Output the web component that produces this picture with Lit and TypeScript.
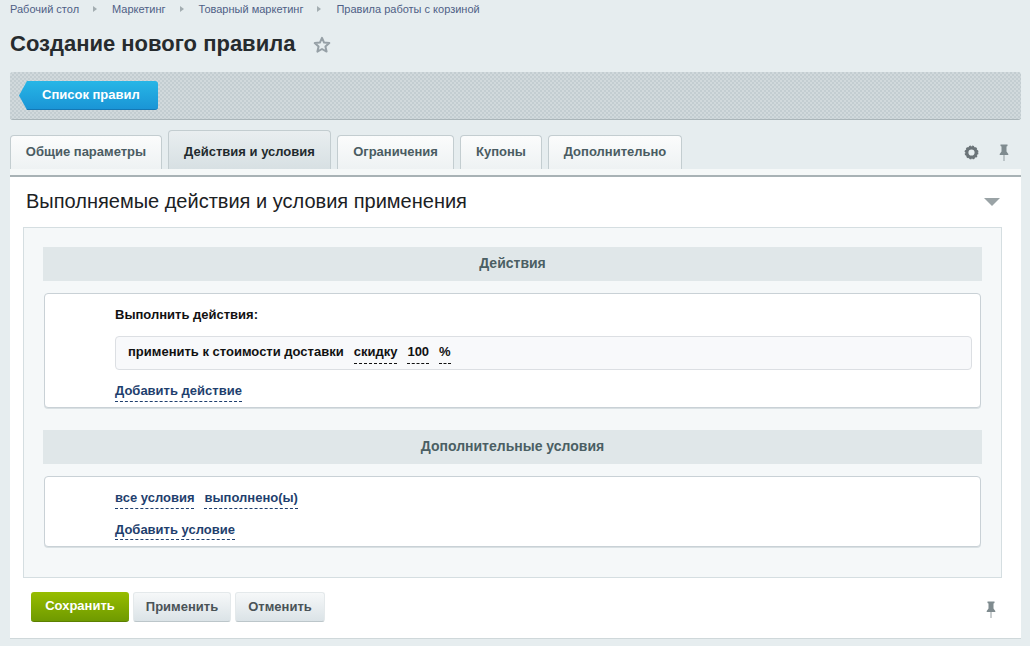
import { LitElement, html, css, svg } from "lit";
import { customElement } from "lit/decorators.js";

const pin = (cls: string) => html`<svg class=${cls} width="10" height="17" viewBox="0 0 10 17">
  <path d="M1.5 0.5h7v1.4l-1 .7v5l1.8 2.4v.9H.7v-.9l1.8-2.4v-5l-1-.7z" fill="#7f8b8f"/>
  <path d="M5 11v6" stroke="#939da1" stroke-width="1" fill="none"/>
</svg>`;

@customElement("app-root")
export class AppRoot extends LitElement {
  static styles = css`
    :host {
      display: block;
      width: 1030px;
      height: 646px;
      overflow: hidden;
      box-sizing: border-box;
      padding: 0 9px 0 10px;
      background: #e6edef;
      font-family: "Liberation Sans", Arial, sans-serif;
      color: #1f2a2e;
    }
    .crumbs {
      display: flex;
      align-items: center;
      height: 18px;
      font-size: 11px;
      color: #4f5f86;
    }
    .crumbs .sep {
      width: 0;
      height: 0;
      border-left: 4px solid #a3adb1;
      border-top: 3.5px solid transparent;
      border-bottom: 3.5px solid transparent;
      margin: 0 15px 0 14px;
    }
    .title-row {
      display: flex;
      align-items: center;
      height: 34px;
      margin-top: 9px;
    }
    h1 {
      margin: 0;
      font-size: 22px;
      line-height: 34px;
      font-weight: bold;
      color: #262b2e;
    }
    .star {
      margin-left: 18px;
      margin-top: 2px;
    }
    .toolbar {
      box-sizing: border-box;
      height: 48px;
      margin-top: 11px;
      padding: 9px 0 0 9px;
      border-radius: 3px;
      border-bottom: 1px solid #a9b4b8;
      background-color: #d1d9dc;
      background-image:
        radial-gradient(circle at 1px 1px, #bec9cd 0.6px, transparent 1px),
        radial-gradient(circle at 3px 3px, #bec9cd 0.6px, transparent 1px);
      background-size: 4px 4px;
    }
    .back {
      position: relative;
      box-sizing: border-box;
      width: 139px;
      height: 29px;
      border-radius: 0 3px 3px 0;
      background: linear-gradient(#27b6e6, #1a95d6);
      border-bottom: 1px solid #1578b4;
      color: #fff;
      font-size: 13px;
      font-weight: bold;
      line-height: 27px;
      padding-left: 23px;
      clip-path: polygon(8px 0, 100% 0, 100% 100%, 8px 100%, 0 50%);
    }
    .tabs {
      display: flex;
      align-items: flex-end;
      height: 39px;
      margin-top: 10px;
      gap: 6px;
    }
    .tab {
      box-sizing: border-box;
      height: 34px;
      border: 1px solid #c3cdd0;
      border-bottom: none;
      border-radius: 4px 4px 0 0;
      background: linear-gradient(#fbfcfc, #eef2f3);
      font-size: 13px;
      font-weight: bold;
      line-height: 32px;
      color: #4a5c62;
      text-align: center;
    }
    .tab.active {
      height: 39px;
      line-height: 41px;
      background: linear-gradient(#e9eef0, #d7e0e3);
      color: #1f2a2e;
    }
    .tab-tools {
      margin-left: auto;
      display: flex;
      align-items: center;
      gap: 20px;
      height: 34px;
      padding-right: 12px;
    }
    .panel {
      box-sizing: border-box;
      height: 464px;
      margin-top: 6px;
      background: #fff;
      border-top: 2px solid #a8b2b5;
      border-bottom: 1px solid #cfd8da;
      box-shadow: 0 -6px 0 0 #f5f8f8;
    }
    .panel-head {
      display: flex;
      align-items: center;
      justify-content: space-between;
      height: 48px;
      padding: 0 21px 0 16px;
      font-size: 20px;
      color: #1b2124;
    }
    .arrow {
      width: 0;
      height: 0;
      border-top: 8px solid #9aa3a6;
      border-left: 8.5px solid transparent;
      border-right: 8.5px solid transparent;
      margin-top: 2px;
    }
    .inner {
      box-sizing: border-box;
      height: 351px;
      margin: 2px 19px 0 13px;
      padding: 19px 19px 0 19px;
      background: #f5f8f9;
      border: 1px solid #d5dee1;
    }
    .sec {
      height: 34px;
      background: #e0e7e9;
      font-size: 14px;
      font-weight: bold;
      line-height: 32px;
      text-align: center;
      color: #4b5f64;
    }
    .card {
      box-sizing: border-box;
      margin: 12px 1px 22px 1px;
      padding: 0 8px 0 70px;
      background: #fff;
      border: 1px solid #c9d1d6;
      border-radius: 4px;
      box-shadow: 0 1px 0 #d9e0e3;
    }
    .card.a {
      height: 115px;
      padding-top: 13px;
    }
    .card.b {
      height: 71px;
      padding-top: 13px;
    }
    .label {
      font-size: 13px;
      font-weight: bold;
      line-height: 16px;
      color: #111;
    }
    .row {
      box-sizing: border-box;
      display: flex;
      gap: 10px;
      align-items: flex-start;
      height: 34px;
      margin-top: 13px;
      padding: 7px 0 0 12px;
      background: #f8f9fb;
      border: 1px solid #dcdfe3;
      border-radius: 4px;
      font-size: 13px;
      font-weight: bold;
      line-height: 15px;
      color: #111;
    }
    .d {
      display: inline-block;
      height: 20px;
      border-bottom: 1px dashed #111;
      box-sizing: border-box;
    }
    .link {
      display: inline-block;
      box-sizing: border-box;
      font-size: 13px;
      font-weight: bold;
      line-height: 15px;
      height: 19px;
      color: #1f3f6e;
      border-bottom: 1px dashed #1f3f6e;
    }
    .add {
      margin-top: 13px;
      display: block;
      width: fit-content;
    }
    .b .add {
      height: 18px;
    }
    .links {
      display: flex;
      gap: 10px;
    }
    .footer {
      display: flex;
      align-items: flex-start;
      gap: 4px;
      height: 60px;
      padding: 14px 0 0 21px;
    }
    .btn {
      box-sizing: border-box;
      height: 30px;
      border-radius: 3px;
      font-size: 13px;
      font-weight: bold;
      line-height: 28px;
      text-align: center;
    }
    .btn.g {
      width: 98px;
      background: linear-gradient(#97bd00, #6f9a00);
      border-bottom: 1px solid #5c8000;
      color: #fff;
    }
    .btn.n {
      background: linear-gradient(#f6f8f9, #dbe3e7);
      border: 1px solid #e4e9eb;
      border-bottom: 1px solid #bcc6ca;
      color: #4a5357;
    }
    .foot-pin {
      margin-left: auto;
      margin-top: 9px;
      margin-right: 25px;
    }
  `;

  render() {
    const tabs: [string, number, boolean][] = [
      ["Общие параметры", 152, false],
      ["Действия и условия", 163, true],
      ["Ограничения", 117, false],
      ["Купоны", 82, false],
      ["Дополнительно", 134, false],
    ];
    return html`
      <div class="crumbs">
        <span>Рабочий стол</span><i class="sep"></i>
        <span>Маркетинг</span><i class="sep"></i>
        <span>Товарный маркетинг</span><i class="sep"></i>
        <span>Правила работы с корзиной</span>
      </div>
      <div class="title-row">
        <h1>Создание нового правила</h1>
        <svg class="star" width="18" height="18" viewBox="0 0 18 18">
          ${svg`<path d="M9 1.8l2.1 4.8 5.2.5-3.9 3.4 1.2 5.1L9 13l-4.6 2.6 1.2-5.1-3.9-3.4 5.2-.5z" fill="none" stroke="#96a0a6" stroke-width="2" stroke-linejoin="round"/>`}
        </svg>
      </div>
      <div class="toolbar"><div class="back">Список правил</div></div>
      <div class="tabs">
        ${tabs.map(
          ([t, w, a]) =>
            html`<div class="tab ${a ? "active" : ""}" style="width:${w}px">${t}</div>`
        )}
        <div class="tab-tools">
          <svg width="15" height="15" viewBox="0 0 16 16">
            <circle cx="8" cy="8" r="5" fill="none" stroke="#6b7478" stroke-width="3.4"/>
            <circle cx="8" cy="8" r="6.6" fill="none" stroke="#6b7478" stroke-width="1.6" stroke-dasharray="2 1.45"/>
          </svg>
          ${pin("")}
        </div>
      </div>
      <div class="panel">
        <div class="panel-head">
          <span>Выполняемые действия и условия применения</span>
          <i class="arrow"></i>
        </div>
        <div class="inner">
          <div class="sec">Действия</div>
          <div class="card a">
            <div class="label">Выполнить действия:</div>
            <div class="row">
              <span>применить к стоимости доставки</span>
              <span class="d">скидку</span>
              <span class="d">100</span>
              <span class="d">%</span>
            </div>
            <span class="link add">Добавить действие</span>
          </div>
          <div class="sec">Дополнительные условия</div>
          <div class="card b">
            <div class="links">
              <span class="link">все условия</span>
              <span class="link">выполнено(ы)</span>
            </div>
            <span class="link add">Добавить условие</span>
          </div>
        </div>
        <div class="footer">
          <div class="btn g">Сохранить</div>
          <div class="btn n" style="width:98px">Применить</div>
          <div class="btn n" style="width:90px">Отменить</div>
          ${pin("foot-pin")}
        </div>
      </div>
    `;
  }
}
